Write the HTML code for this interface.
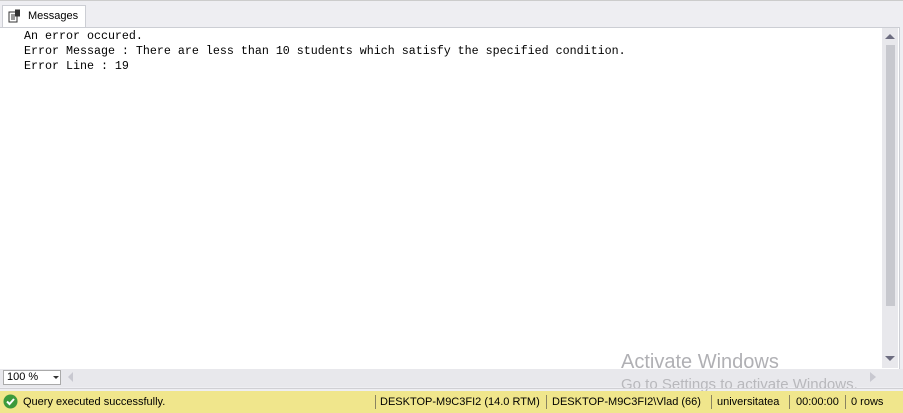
<!DOCTYPE html>
<html><head><style>
body{margin:0;width:903px;height:413px;overflow:hidden;background:#eeeef2;position:relative;font-family:"Liberation Sans",sans-serif}
.abs{position:absolute}
.mono{font-family:"Liberation Mono",monospace;font-size:11.67px;color:#000;line-height:15px}
.st{font-size:11px;color:#000;top:396px}
.sep{position:absolute;top:395px;width:1px;height:14px;background:#8a8460}
</style></head><body>
<div class="abs" style="left:0;top:0;width:903px;height:1px;background:#ccc"></div>
<div class="abs" style="left:2px;top:5px;width:82px;height:22px;background:#fff;border:1px solid #ccced4;border-bottom:none"></div>
<svg class="abs" style="left:8px;top:9px" width="14" height="14" viewBox="0 0 14 14"><rect x="1" y="3" width="8" height="10" fill="#fff" stroke="#333"/><path d="M3 6h4M3 8h4M3 10h4" stroke="#333"/><rect x="7" y="0.5" width="5" height="7" fill="#333"/></svg>
<div class="abs" style="left:28px;top:10px;font-size:11px">Messages</div>
<div class="abs" style="left:0;top:27px;width:899px;height:341px;background:#fff;border-top:1px solid #ccced4;border-right:1px solid #ccced4"></div>
<div class="abs mono" style="left:24px;top:29px;white-space:pre">An error occured.
Error Message : There are less than 10 students which satisfy the specified condition.
Error Line : 19</div>
<div class="abs" style="left:882px;top:28px;width:16px;height:340px;background:#e8e8ec"></div>
<svg class="abs" style="left:884px;top:32px" width="12" height="8"><path d="M1 7L6 2L11 7Z" fill="#6d6d80"/></svg>
<div class="abs" style="left:886px;top:45px;width:9px;height:261px;background:#c7c8ce"></div>
<svg class="abs" style="left:884px;top:354px" width="12" height="8"><path d="M1 2L6 7L11 2Z" fill="#6d6d80"/></svg>
<div class="abs" style="left:0;top:369px;width:903px;height:18px;background:#e8e8ec"></div>
<div class="abs" style="left:3px;top:370px;width:58px;height:15px;background:#fff;border:1px solid #aaa;font-size:11px;line-height:13px;box-sizing:border-box;padding-left:3px">100 %</div>
<svg class="abs" style="left:53px;top:376px" width="6" height="4"><path d="M0 0H6L3 3Z" fill="#333"/></svg>
<svg class="abs" style="left:68px;top:372px" width="6" height="10"><path d="M5 0V10L0 5Z" fill="#c8c8d0"/></svg>
<svg class="abs" style="left:870px;top:372px" width="6" height="10"><path d="M0 0V10L6 5Z" fill="#c8c8d0"/></svg>
<div class="abs" style="left:621px;top:351px;font-size:20px;color:#b0b0b4">Activate Windows</div>
<div class="abs" style="left:621px;top:376px;font-size:15px;color:#b8b8bc">Go to Settings to activate Windows.</div>
<div class="abs" style="left:0;top:388px;width:903px;height:1px;background:#d0d0d4"></div>
<div class="abs" style="left:0;top:391px;width:903px;height:22px;background:#f0e68c"></div>
<svg class="abs" style="left:3px;top:394px" width="15" height="15"><circle cx="7.5" cy="7.5" r="7" fill="#3c9a3c"/><path d="M4 7.5L6.5 10L11 5" stroke="#fff" stroke-width="2" fill="none"/></svg>
<div class="abs st" style="left:23px">Query executed successfully.</div>
<div class="sep" style="left:375px"></div>
<div class="abs st" style="left:380px">DESKTOP-M9C3FI2 (14.0 RTM)</div>
<div class="sep" style="left:546px"></div>
<div class="abs st" style="left:552px">DESKTOP-M9C3FI2\Vlad (66)</div>
<div class="sep" style="left:711px"></div>
<div class="abs st" style="left:717px">universitatea</div>
<div class="sep" style="left:789px"></div>
<div class="abs st" style="left:796px">00:00:00</div>
<div class="sep" style="left:845px"></div>
<div class="abs st" style="left:851px">0 rows</div>
</body></html>
